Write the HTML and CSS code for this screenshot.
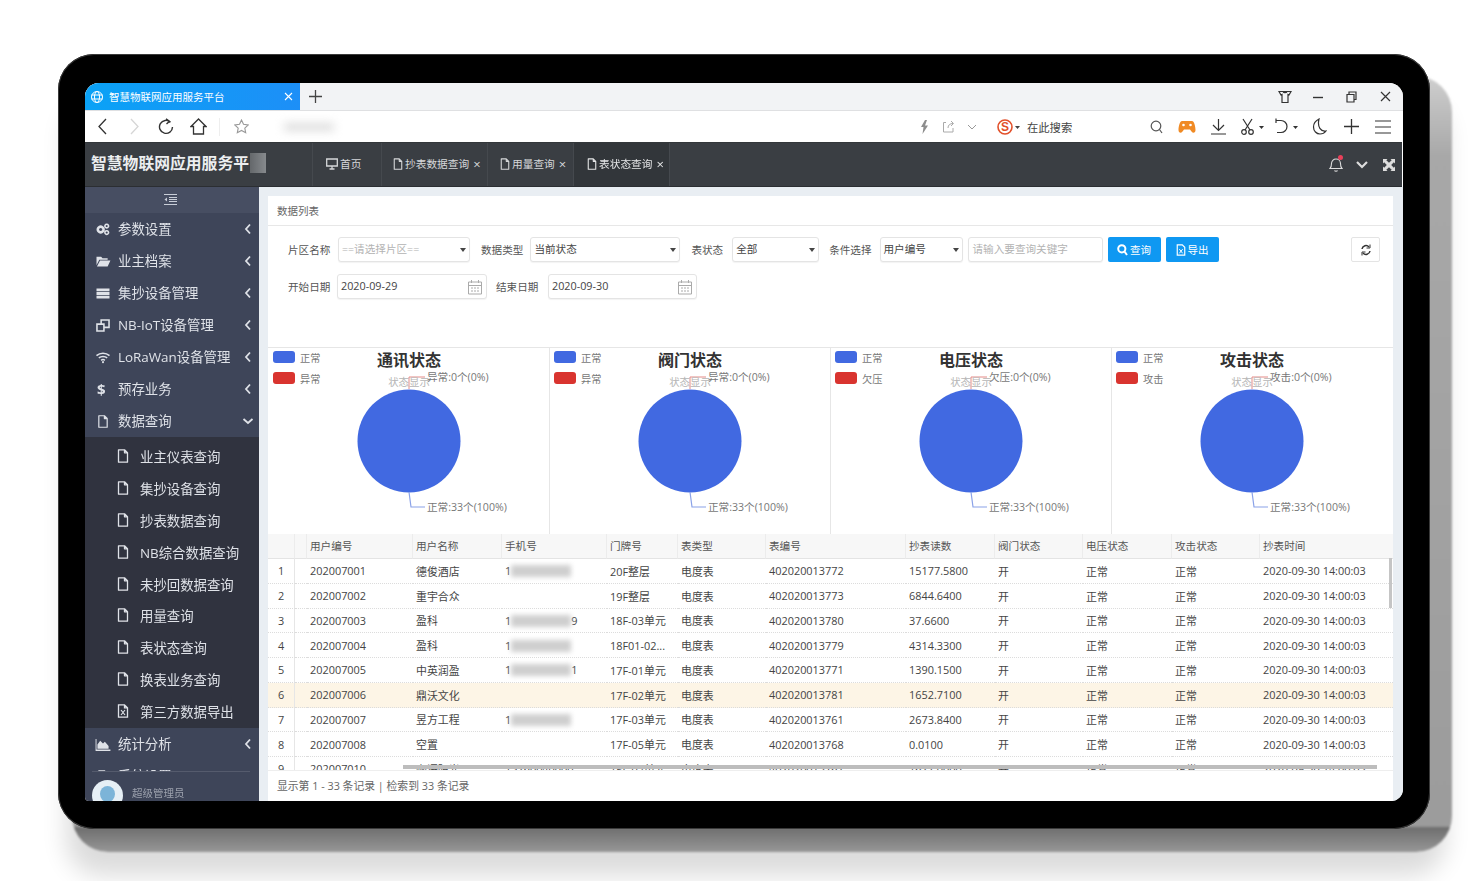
FILE: index.html
```html
<!DOCTYPE html>
<html lang="zh-CN">
<head>
    <meta charset="UTF-8">
    <title>智慧物联网应用服务平台</title>
    <link rel="stylesheet" href="styles.css">
</head>
<body>

<svg class="sprite" width="0" height="0">
    <symbol id="i-file" viewBox="0 0 12 14"><path d="M1.5 .8h6l3 3v9.4h-9zM7.500 .8v3h3" fill="none" stroke="currentColor" stroke-width="1.3" stroke-linejoin="round"/></symbol>
    <symbol id="i-left" viewBox="0 0 8 12"><path d="M6 1.500 2 6l4 4.500" fill="none" stroke="currentColor" stroke-width="1.8"/></symbol>
    <symbol id="i-cal" viewBox="0 0 16 16"><path d="M1.500 3h13v12h-13zM1.500 6.500h13M4.500 1v3M11.500 1v3" fill="none" stroke="#aaa" stroke-width="1"/><path d="M4 9h2M7 9h2M10 9h2M4 12h2M7 12h2M10 12h2" stroke="#aaa" stroke-width="1.200"/></symbol>
    <symbol id="i-pie" viewBox="0 0 281 186"><circle cx="141" cy="93" r="51.500" fill="#4169e1"/></symbol>
</svg>

<div class="stage">
<div class="tablet">
<div class="screen">

    <!-- 浏览器标签栏 -->
    <div class="browser-tabs">
        <div class="browser-tab">
            <svg width="14" height="14" viewBox="0 0 14 14" fill="none" stroke="#fff" stroke-width="1"><circle cx="7" cy="7" r="5.500"/><ellipse cx="7" cy="7" rx="2.500" ry="5.500"/><path d="M1.500 5h11M1.500 9h11"/></svg>
            <span class="browser-tab-title">智慧物联网应用服务平台</span>
            <svg width="9" height="9" viewBox="0 0 9 9" stroke="#fff" stroke-width="1.100"><path d="M1 1l7 7M8 1 1 8"/></svg>
        </div>
        <svg class="tab-plus" width="13" height="13" viewBox="0 0 13 13" stroke="#444" stroke-width="1.300"><path d="M6.500 0v13M0 6.500h13"/></svg>
        <div class="spacer"></div>
        <div class="win-btn"><svg width="14" height="14" viewBox="0 0 14 14" fill="none" stroke="#333" stroke-width="1.200"><path d="M1 1.500h12l-2 3.500-1-.5v8H4v-8l-1 .5zM5 1.500c.5 1.500 3.500 1.500 4 0"/></svg></div>
        <div class="win-btn"><svg width="10" height="10" viewBox="0 0 10 10" stroke="#333" stroke-width="1.400"><path d="M0 5.500h10"/></svg></div>
        <div class="win-btn"><svg width="11" height="12" viewBox="0 0 11 12" fill="none" stroke="#333" stroke-width="1.200"><path d="M1 3.500h7v7.500H1zM3 3.500V1h7v7.500H8"/></svg></div>
        <div class="win-btn"><svg width="11" height="11" viewBox="0 0 11 11" stroke="#333" stroke-width="1.200"><path d="M1 1l9 9M10 1l-9 9"/></svg></div>
    </div>

    <!-- 地址栏 -->
    <div class="browser-bar">
        <div class="bar-btn"><svg width="11" height="17" viewBox="0 0 11 17" fill="none" stroke="#333" stroke-width="1.300"><path d="M9 1 2 8.500 9 16"/></svg></div>
        <div class="bar-btn"><svg width="11" height="17" viewBox="0 0 11 17" fill="none" stroke="#d6d6d6" stroke-width="1.300"><path d="M2 1l7 7.500L2 16"/></svg></div>
        <div class="bar-btn"><svg width="16" height="17" viewBox="0 0 16 17" fill="none" stroke="#333" stroke-width="1.400"><path d="M12.500 4.200A6.500 6.500 0 1 0 14.500 9M8 .8l3.500 2.500L8.500 6" /></svg></div>
        <div class="bar-btn"><svg width="17" height="17" viewBox="0 0 17 17" fill="none" stroke="#333" stroke-width="1.300"><path d="M8.500 1 1 8.500h2.500V16h10V8.500H16z"/></svg></div>
        <div class="bar-divider"></div>
        <div class="bar-btn"><svg width="15" height="15" viewBox="0 0 15 15" fill="none" stroke="#999" stroke-width="1.100"><path d="M7.500 1l2 4.300 4.700.6-3.400 3.200.9 4.700-4.200-2.300-4.200 2.300.9-4.700L.8 5.900l4.700-.6z"/></svg></div>
        <div class="bar-blur"></div>
        <div class="spacer"></div>
        <div class="bar-small"><svg width="9" height="14" viewBox="0 0 9 14" fill="#8d8d8d"><path d="M5 0 1 7h2.500L2.500 14 8 5.500H5L7 0z"/></svg></div>
        <div class="bar-small"><svg width="13" height="13" viewBox="0 0 13 13" fill="none" stroke="#aaa" stroke-width="1"><path d="M4 2.500H1.500v9.500h9.500V8M6 8c0-3 2-4.500 5-4.500M9 1l2.500 2.500L9 6"/></svg></div>
        <div class="bar-small"><svg width="10" height="6" viewBox="0 0 10 6" fill="none" stroke="#999" stroke-width="1"><path d="M1 1l4 4 4-4"/></svg></div>
        <div class="bar-search">
            <svg width="24" height="18" viewBox="0 0 24 18"><circle cx="9" cy="9" r="7" fill="#fff" stroke="#e2502a" stroke-width="1.600"/><text x="9" y="13" font-size="12" font-weight="700" fill="#e2502a" text-anchor="middle" font-family="Liberation Sans">S</text><path d="M19 8h5l-2.500 3z" fill="#444"/></svg>
            <span>在此搜索</span>
        </div>
        <div class="bar-btn narrow"><svg width="13" height="14" viewBox="0 0 13 14" fill="none" stroke="#555" stroke-width="1.200"><circle cx="6" cy="6" r="4.800"/><path d="M9.500 9.500 12 13"/></svg></div>
        <div class="bar-btn"><svg width="18" height="14" viewBox="0 0 18 14"><path d="M4 1h10c2 0 3.500 5 3.500 9 0 3-2.500 3.500-4 1.500L12 9.500H6L4.500 11.500c-1.500 2-4 1.500-4-1.500C.5 6 2 1 4 1z" fill="#f08a24"/><circle cx="5.500" cy="5" r="1.300" fill="#fff"/><circle cx="12.500" cy="5" r="1.300" fill="#fff"/></svg></div>
        <div class="bar-btn tight"><svg width="17" height="17" viewBox="0 0 17 17" fill="none" stroke="#333" stroke-width="1.200"><path d="M8.500 1v11M3 7l5.500 5.500L14 7M1 16h15"/></svg></div>
        <div class="bar-btn wide"><svg width="26" height="17" viewBox="0 0 26 17" fill="none" stroke="#333" stroke-width="1.200"><path d="M3 1l7 11M12 1 5 12"/><circle cx="4" cy="14" r="2.300"/><circle cx="11" cy="14" r="2.300"/><path d="M19 8h5l-2.500 3z" fill="#333" stroke="none"/></svg></div>
        <div class="bar-btn"><svg width="26" height="17" viewBox="0 0 26 17" fill="none" stroke="#333" stroke-width="1.200"><path d="M2 2.500h5a6 6 0 0 1 0 12H3M2 .5v4.500"/><path d="M19 8h5l-2.500 3z" fill="#333" stroke="none"/></svg></div>
        <div class="bar-btn"><svg width="15" height="17" viewBox="0 0 15 17" fill="none" stroke="#333" stroke-width="1.200"><path d="M7 1C3 3 1.500 6 1.500 9c0 4 3 7 6.500 7 2.500 0 4.500-1 6-3-5 1-9-4-7-12z"/></svg></div>
        <div class="bar-btn"><svg width="15" height="15" viewBox="0 0 15 15" stroke="#333" stroke-width="1.300"><path d="M7.500 0v15M0 7.500h15"/></svg></div>
        <div class="bar-btn"><svg width="16" height="14" viewBox="0 0 16 14" stroke="#333" stroke-width="1.200"><path d="M0 1h16M0 7h16M0 13h16"/></svg></div>
    </div>

    <!-- 系统顶栏 -->
    <div class="app-header">
        <div class="logo"><span>智慧物联网应用服务平</span><i class="logo-blur"></i></div>
        <div class="nav-tab tab-home">
            <svg width="12" height="12" viewBox="0 0 12 12" fill="none" stroke="currentColor" stroke-width="1.300"><path d="M.7 1h10.600v7H.7z"/><path d="M3.500 11h5M6 8v3" /></svg>首页
        </div>
        <div class="nav-tab tab-a"><svg class="ico-f"><use href="#i-file"/></svg>抄表数据查询<b>×</b></div>
        <div class="nav-tab tab-b"><svg class="ico-f"><use href="#i-file"/></svg>用量查询<b>×</b></div>
        <div class="nav-tab tab-c active"><svg class="ico-f"><use href="#i-file"/></svg>表状态查询<b>×</b></div>
        <div class="spacer"></div>
        <div class="head-btn bell">
            <svg width="14" height="17" viewBox="0 0 14 17" fill="none" stroke="#ddd" stroke-width="1.100"><path d="M1 12.500c1.500-1.500 1.500-3 1.500-5C2.500 5 4.500 3 7 3s4.500 2 4.500 4.500c0 2 0 3.500 1.500 5zM5.500 14.500c.5 1 2.500 1 3 0"/></svg>
            <i class="bell-dot"></i>
        </div>
        <div class="head-btn"><svg width="12" height="8" viewBox="0 0 12 8" fill="none" stroke="#ddd" stroke-width="2.200"><path d="M1 1l5 5 5-5"/></svg></div>
        <div class="head-btn"><svg width="12" height="12" viewBox="0 0 12 12" fill="#ddd"><path d="M0 0h4.500L3.300 1.200 6 3.800 8.700 1.200 7.500 0H12v4.500l-1.200-1.200L8.200 6l2.600 2.700L12 7.500V12H7.500l1.200-1.200L6 8.200 3.300 10.800 4.500 12H0V7.500l1.200 1.200L3.800 6 1.200 3.300 0 4.500z"/></svg></div>
    </div>

    <div class="app-body">
        <!-- 左侧菜单 -->
        <aside class="sidebar">
            <div class="side-toggle"><svg width="13" height="11" viewBox="0 0 13 11" stroke="#c9ced8" stroke-width="1"><path d="M0 .5h13M5 3.500h8M5 5.500h8M5 7.500h8M0 10.500h13"/><path d="M3 3.500 .5 5.500l2.500 2z" fill="#c9ced8" stroke="none"/></svg></div>
            <div class="side-menu">
                <div class="menu-item">
                    <svg class="menu-ico" viewBox="0 0 16 14" fill="currentColor"><path d="M5.500 2.500a4.500 4.500 0 1 0 .01 0zm0 2.800a1.700 1.700 0 1 1-.01 0zM12 .5a2.800 2.800 0 1 0 .01 0zm0 1.700a1.100 1.100 0 1 1-.01 0zM12 7.500a2.800 2.800 0 1 0 .01 0zm0 1.700a1.100 1.100 0 1 1-.01 0z" fill-rule="evenodd"/></svg>
                    <span>参数设置</span><svg class="arrow"><use href="#i-left"/></svg>
                </div>
                <div class="menu-item">
                    <svg class="menu-ico" viewBox="0 0 16 14" fill="currentColor"><path d="M1 2h5l1.500 1.500H13V5H4L1 11zM4.800 6H16l-3 6.500H1.500z"/></svg>
                    <span>业主档案</span><svg class="arrow"><use href="#i-left"/></svg>
                </div>
                <div class="menu-item">
                    <svg class="menu-ico" viewBox="0 0 16 14" fill="currentColor"><path d="M1 1.500h14v3H1zM1 5.500h14v3H1zM1 9.500h14v3H1z"/></svg>
                    <span>集抄设备管理</span><svg class="arrow"><use href="#i-left"/></svg>
                </div>
                <div class="menu-item">
                    <svg class="menu-ico" viewBox="0 0 16 14" fill="none" stroke="currentColor" stroke-width="1.700"><path d="M1.500 5.500h7.500v7.500H1.500zM6 5.500V1h8.500v8H9"/></svg>
                    <span>NB-IoT设备管理</span><svg class="arrow"><use href="#i-left"/></svg>
                </div>
                <div class="menu-item">
                    <svg class="menu-ico" viewBox="0 0 16 14" fill="none" stroke="currentColor" stroke-width="1.700"><path d="M1 5c4-3.500 10-3.500 14 0M3.500 7.500c2.500-2 6.500-2 9 0M6 10c1-.8 3-.8 4 0"/><circle cx="8" cy="12" r="1.100" fill="currentColor" stroke="none"/></svg>
                    <span>LoRaWan设备管理</span><svg class="arrow"><use href="#i-left"/></svg>
                </div>
                <div class="menu-item">
                    <em class="menu-ico dollar">$</em>
                    <span>预存业务</span><svg class="arrow"><use href="#i-left"/></svg>
                </div>
                <div class="menu-item">
                    <svg class="menu-ico"><use href="#i-file"/></svg>
                    <span>数据查询</span><svg class="arrow down"><use href="#i-left"/></svg>
                </div>
                <div class="submenu">
                    <div class="sub-item"><svg class="sub-ico"><use href="#i-file"/></svg>业主仪表查询</div>
                    <div class="sub-item"><svg class="sub-ico"><use href="#i-file"/></svg>集抄设备查询</div>
                    <div class="sub-item"><svg class="sub-ico"><use href="#i-file"/></svg>抄表数据查询</div>
                    <div class="sub-item"><svg class="sub-ico"><use href="#i-file"/></svg>NB综合数据查询</div>
                    <div class="sub-item"><svg class="sub-ico"><use href="#i-file"/></svg>未抄回数据查询</div>
                    <div class="sub-item"><svg class="sub-ico"><use href="#i-file"/></svg>用量查询</div>
                    <div class="sub-item"><svg class="sub-ico"><use href="#i-file"/></svg>表状态查询</div>
                    <div class="sub-item"><svg class="sub-ico"><use href="#i-file"/></svg>换表业务查询</div>
                    <div class="sub-item"><svg class="sub-ico" viewBox="0 0 12 14"><path d="M1.500 .8h6l3 3v9.400h-9zM7.500 .8v3h3" fill="none" stroke="currentColor" stroke-width="1.300"/><path d="M4 6l4 5M8 6l-4 5" stroke="currentColor" stroke-width="1.200"/></svg>第三方数据导出</div>
                </div>
                <div class="menu-item">
                    <svg class="menu-ico" viewBox="0 0 16 14" fill="currentColor"><path d="M0 1h1v11.500h15V14H0z"/><path d="M2 11.500V7l3-4 3 3 2-2 4 4.500v3z"/></svg>
                    <span>统计分析</span><svg class="arrow"><use href="#i-left"/></svg>
                </div>
                <div class="menu-item">
                    <svg class="menu-ico"><use href="#i-file"/></svg>
                    <span>系统设置</span><svg class="arrow"><use href="#i-left"/></svg>
                </div>
            </div>
            <div class="side-user">
                <div class="avatar"><i></i></div>
                <span>超级管理员</span>
            </div>
        </aside>

        <!-- 内容区 -->
        <main class="main">
            <div class="card">
                <div class="card-head">数据列表</div>

                <div class="filters">
                    <div class="filter-row">
                        <label class="w-l1">片区名称</label>
                        <div class="ctl select w-s1 muted">==请选择片区==</div>
                        <label class="w-l2">数据类型</label>
                        <div class="ctl select w-s2">当前状态</div>
                        <label class="w-l3">表状态</label>
                        <div class="ctl select w-s3">全部</div>
                        <label class="w-l4">条件选择</label>
                        <div class="ctl select w-s4">用户编号</div>
                        <div class="ctl w-kw muted">请输入要查询关键字</div>
                        <button class="btn">
                            <svg width="11" height="12" viewBox="0 0 11 12" fill="none" stroke="#fff" stroke-width="2"><circle cx="4.800" cy="4.800" r="3.600"/><path d="M7.500 7.500 10 11"/></svg>查询
                        </button>
                        <button class="btn">
                            <svg width="10" height="12" viewBox="0 0 12 14"><path d="M1.500 .8h6l3 3v9.400h-9z" fill="none" stroke="#fff" stroke-width="1.400"/><path d="M4 6l4 5M8 6l-4 5" stroke="#fff" stroke-width="1.200"/></svg>导出
                        </button>
                        <div class="spacer"></div>
                        <button class="btn-refresh">
                            <svg width="10" height="12" viewBox="0 0 10 12" fill="none" stroke="#333" stroke-width="1.500"><path d="M1 5a4 4 0 0 1 7-2M9 7a4 4 0 0 1-7 2"/><path d="M9 .5V4H5.500M1 11.500V8h3.500" stroke-width="1"/></svg>
                        </button>
                    </div>
                    <div class="filter-row">
                        <label class="w-l1 tight">开始日期</label>
                        <div class="ctl date w-d1">2020-09-29<svg class="cal"><use href="#i-cal"/></svg></div>
                        <label class="w-l5">结束日期</label>
                        <div class="ctl date w-d2">2020-09-30<svg class="cal"><use href="#i-cal"/></svg></div>
                    </div>
                </div>

                <div class="charts">
                    <div class="chart">
                        <div class="legend">
                            <div><i class="sw-blue"></i>正常</div>
                            <div><i class="sw-red"></i>异常</div>
                        </div>
                        <svg class="chart-svg" viewBox="0 0 281 186">
                            <use href="#i-pie"/>
                            <path d="M141 41V29h16" class="line-red"/>
                            <path d="M141 144l2 15h14" class="line-blue"/>
                            <text x="141" y="18" class="c-title">通讯状态</text>
                            <text x="141" y="38" class="c-sub">状态显示</text>
                            <text x="159" y="33" class="c-label">异常:0个(0%)</text>
                            <text x="159" y="163" class="c-label">正常:33个(100%)</text>
                        </svg>
                    </div>
                    <div class="chart">
                        <div class="legend">
                            <div><i class="sw-blue"></i>正常</div>
                            <div><i class="sw-red"></i>异常</div>
                        </div>
                        <svg class="chart-svg" viewBox="0 0 281 186">
                            <use href="#i-pie"/>
                            <path d="M141 41V29h16" class="line-red"/>
                            <path d="M141 144l2 15h14" class="line-blue"/>
                            <text x="141" y="18" class="c-title">阀门状态</text>
                            <text x="141" y="38" class="c-sub">状态显示</text>
                            <text x="159" y="33" class="c-label">异常:0个(0%)</text>
                            <text x="159" y="163" class="c-label">正常:33个(100%)</text>
                        </svg>
                    </div>
                    <div class="chart">
                        <div class="legend">
                            <div><i class="sw-blue"></i>正常</div>
                            <div><i class="sw-red"></i>欠压</div>
                        </div>
                        <svg class="chart-svg" viewBox="0 0 281 186">
                            <use href="#i-pie"/>
                            <path d="M141 41V29h16" class="line-red"/>
                            <path d="M141 144l2 15h14" class="line-blue"/>
                            <text x="141" y="18" class="c-title">电压状态</text>
                            <text x="141" y="38" class="c-sub">状态显示</text>
                            <text x="159" y="33" class="c-label">欠压:0个(0%)</text>
                            <text x="159" y="163" class="c-label">正常:33个(100%)</text>
                        </svg>
                    </div>
                    <div class="chart">
                        <div class="legend">
                            <div><i class="sw-blue"></i>正常</div>
                            <div><i class="sw-red"></i>攻击</div>
                        </div>
                        <svg class="chart-svg" viewBox="0 0 281 186">
                            <use href="#i-pie"/>
                            <path d="M141 41V29h16" class="line-red"/>
                            <path d="M141 144l2 15h14" class="line-blue"/>
                            <text x="141" y="18" class="c-title">攻击状态</text>
                            <text x="141" y="38" class="c-sub">状态显示</text>
                            <text x="159" y="33" class="c-label">攻击:0个(0%)</text>
                            <text x="159" y="163" class="c-label">正常:33个(100%)</text>
                        </svg>
                    </div>
                </div>

                <div class="table-wrap">
                    <table class="data-table">
                        <colgroup>
                            <col class="c-idx"><col class="c-gap"><col class="c-106"><col class="c-89"><col class="c-105"><col class="c-71"><col class="c-88"><col class="c-140"><col class="c-89"><col class="c-88"><col class="c-89"><col class="c-88"><col>
                        </colgroup>
                        <thead>
                            <tr><th></th><th></th><th>用户编号</th><th>用户名称</th><th>手机号</th><th>门牌号</th><th>表类型</th><th>表编号</th><th>抄表读数</th><th>阀门状态</th><th>电压状态</th><th>攻击状态</th><th>抄表时间</th></tr>
                        </thead>
                        <tbody>
                            <tr><td class="idx">1</td><td></td><td>202007001</td><td>德俊酒店</td><td>1<i class="mask"></i></td><td>20F整层</td><td>电度表</td><td>402020013772</td><td>15177.5800</td><td>开</td><td>正常</td><td>正常</td><td>2020-09-30 14:00:03</td></tr>
                            <tr><td class="idx">2</td><td></td><td>202007002</td><td>重宇合众</td><td></td><td>19F整层</td><td>电度表</td><td>402020013773</td><td>6844.6400</td><td>开</td><td>正常</td><td>正常</td><td>2020-09-30 14:00:03</td></tr>
                            <tr><td class="idx">3</td><td></td><td>202007003</td><td>盈科</td><td>1<i class="mask"></i>9</td><td>18F-03单元</td><td>电度表</td><td>402020013780</td><td>37.6600</td><td>开</td><td>正常</td><td>正常</td><td>2020-09-30 14:00:03</td></tr>
                            <tr><td class="idx">4</td><td></td><td>202007004</td><td>盈科</td><td>1<i class="mask"></i></td><td>18F01-02...</td><td>电度表</td><td>402020013779</td><td>4314.3300</td><td>开</td><td>正常</td><td>正常</td><td>2020-09-30 14:00:03</td></tr>
                            <tr><td class="idx">5</td><td></td><td>202007005</td><td>中英润盈</td><td>1<i class="mask"></i>1</td><td>17F-01单元</td><td>电度表</td><td>402020013771</td><td>1390.1500</td><td>开</td><td>正常</td><td>正常</td><td>2020-09-30 14:00:03</td></tr>
                            <tr class="selected"><td class="idx">6</td><td></td><td>202007006</td><td>鼎沃文化</td><td></td><td>17F-02单元</td><td>电度表</td><td>402020013781</td><td>1652.7100</td><td>开</td><td>正常</td><td>正常</td><td>2020-09-30 14:00:03</td></tr>
                            <tr><td class="idx">7</td><td></td><td>202007007</td><td>昱方工程</td><td>1<i class="mask"></i></td><td>17F-03单元</td><td>电度表</td><td>402020013761</td><td>2673.8400</td><td>开</td><td>正常</td><td>正常</td><td>2020-09-30 14:00:03</td></tr>
                            <tr><td class="idx">8</td><td></td><td>202007008</td><td>空置</td><td></td><td>17F-05单元</td><td>电度表</td><td>402020013768</td><td>0.0100</td><td>开</td><td>正常</td><td>正常</td><td>2020-09-30 14:00:03</td></tr>
                            <tr><td class="idx">9</td><td></td><td>202007010</td><td>咖语阳光</td><td>15260040000</td><td>15F-02单元</td><td>电度表</td><td>402020013767</td><td>1627.0000</td><td>开</td><td>正常</td><td>正常</td><td>2020-09-30 14:00:03</td></tr>
                        </tbody>
                    </table>
                    <div class="scroll-y"></div>
                    <div class="scroll-x"></div>
                </div>

                <div class="pager">显示第 1 - 33 条记录 | 检索到 33 条记录</div>
            </div>
        </main>
    </div>

</div>
</div>
</div>

</body>
</html>
```

FILE: styles.css
```css
* {
    box-sizing: border-box;
}

body {
    margin: 0;
    background-color: #fff;
    font-family: "Open Sans", "Noto Sans CJK SC", sans-serif;
    overflow: hidden;
}

.sprite {
    position: absolute;
}

.spacer {
    flex: 1;
}

.stage {
    width: 1483px;
    height: 881px;
    padding: 54px 0 0 58px;
}

/* 平板外框 */
.tablet {
    position: relative;
    width: 1372px;
    height: 775px;
    padding: 29px 27px 28px 27px;
    background-color: #000;
    border-radius: 36px;
    box-shadow: inset 0 0 0 1px #3a3a3a;
}

/* 平板投影 */
.tablet::before {
    content: "";
    position: absolute;
    top: 22px;
    left: 14px;
    right: -22px;
    bottom: -23px;
    z-index: -1;
    border-radius: 36px;
    background: linear-gradient(180deg, #cfcfcf 0, #a8a8a8 80px, #9c9c9c 750px, #6f6f6f 752px, #979797 776px);
    box-shadow: -6px 24px 24px rgba(0, 0, 0, 0.14);
    filter: blur(0.8px);
}

.screen {
    display: flex;
    flex-direction: column;
    height: 718px;
    background-color: #fff;
    border-radius: 14px 14px 12px 4px;
    overflow: hidden;
    filter: blur(0.35px);
}

/* 浏览器标签栏 */
.browser-tabs {
    display: flex;
    align-items: center;
    flex: 0 0 27px;
    background-color: #f2f3f5;
    border-bottom: 1px solid #dfe0e2;
}

.browser-tab {
    display: flex;
    align-items: center;
    width: 215px;
    height: 27px;
    padding: 0 7px 0 5px;
    color: #fff;
    font-size: 10.5px;
    background: linear-gradient(90deg, #0aa2f6, #1d8ff7);
}

.browser-tab-title {
    flex: 1;
    margin-left: 5px;
}

.tab-plus {
    margin-left: 9px;
}

.win-btn {
    display: flex;
    align-items: center;
    justify-content: center;
    width: 33.500px;
    height: 26px;
}

.win-btn:last-child {
    margin-right: 1px;
}

/* 地址栏 */
.browser-bar {
    display: flex;
    align-items: center;
    flex: 0 0 31px;
    padding: 0 4px 0 1px;
    background-color: #fff;
}

.bar-btn {
    display: flex;
    align-items: center;
    justify-content: center;
    width: 32px;
    height: 31px;
}

.bar-btn.narrow {
    width: 30px;
}

.bar-btn.tight {
    width: 31px;
}

.bar-btn.wide {
    width: 37px;
}

.bar-divider {
    width: 1px;
    height: 18px;
    margin: 0 5px;
    background-color: #eee;
}

.bar-blur {
    width: 50px;
    height: 8px;
    margin-left: 27px;
    background-color: #bbb;
    filter: blur(5px);
    opacity: 0.5;
}

.bar-small {
    display: flex;
    align-items: center;
    justify-content: center;
    width: 24px;
    height: 31px;
}

.bar-search {
    display: flex;
    align-items: center;
    width: 145px;
    margin-left: 12px;
    font-size: 11.300px;
    color: #444;
}

.bar-search span {
    margin-left: 7px;
}

/* 系统顶栏 */
.app-header {
    display: flex;
    align-items: stretch;
    flex: 0 0 45px;
    margin-right: 1px;
    color: #d6d8da;
    font-size: 10.700px;
    background-color: #3a3e43;
    border-top: 1px solid #33373a;
    border-bottom: 1px solid #2b2e32;
}

.logo {
    display: flex;
    align-items: center;
    width: 227px;
    padding: 0 0 4px 6px;
    color: #eceef0;
    font-size: 15.800px;
    font-weight: 700;
}

.logo-blur {
    width: 16px;
    height: 20px;
    margin-left: 1px;
    background: linear-gradient(90deg, #6f7275, #9a9da0);
    opacity: 0.8;
}

.nav-tab {
    display: flex;
    align-items: center;
    padding-bottom: 2px;
    padding-left: 13px;
    border-left: 1px solid #45494e;
}

.nav-tab svg {
    margin-right: 2px;
}

.nav-tab b {
    margin-left: 4px;
    font-size: 13px;
    font-weight: 400;
}

.tab-home {
    width: 69px;
}

.tab-a {
    width: 106px;
    padding-left: 11px;
}

.tab-b {
    width: 86px;
    padding-left: 12px;
}

.tab-c {
    width: 97px;
    padding-left: 13px;
    border-right: 1px solid #45494e;
}

.nav-tab.active {
    color: #e6e7e8;
    background-color: #32363a;
}

.ico-f {
    width: 10px;
    height: 12px;
}

.head-btn {
    position: relative;
    display: flex;
    align-items: center;
    justify-content: center;
    width: 26.500px;
}

.bell-dot {
    position: absolute;
    top: 12px;
    right: 6px;
    width: 5px;
    height: 5px;
    background-color: #e8405a;
    border-radius: 50%;
}

/* 左侧菜单 */
.app-body {
    display: flex;
    flex: 1;
    min-height: 0;
}

.sidebar {
    display: flex;
    flex-direction: column;
    flex: 0 0 174px;
    color: #dfe2e8;
    background-color: #3e4559;
}

.side-toggle {
    display: flex;
    align-items: center;
    justify-content: center;
    flex: 0 0 26px;
    padding: 0 4px 1px 0;
    background-color: #474e62;
}

.side-menu {
    flex: 1;
    min-height: 0;
    overflow: hidden;
}

.menu-item {
    display: flex;
    align-items: center;
    height: 32px;
    padding: 0 7px 0 10px;
    font-size: 13.400px;
}

.menu-item span {
    flex: 1;
    margin-left: 7px;
    padding-bottom: 2px;
}

.menu-ico {
    flex: 0 0 16px;
    width: 16px;
    height: 13px;
}

.dollar {
    height: auto;
    padding-left: 2px;
    font-size: 15px;
    font-style: normal;
    font-weight: 700;
}

.arrow {
    width: 8px;
    height: 12px;
}

.arrow.down {
    transform: rotate(-90deg);
}

.submenu {
    padding-top: 4px;
    background-color: #30333f;
}

.sub-item {
    display: flex;
    align-items: center;
    height: 31.900px;
    padding: 0 0 2px 32px;
    font-size: 13.400px;
}

.sub-ico {
    width: 12px;
    height: 14px;
    margin-right: 11px;
}

.side-user {
    position: relative;
    display: flex;
    align-items: flex-start;
    flex: 0 0 30px;
    margin: 0 9px 0 7px;
    padding-top: 8px;
    font-size: 10.500px;
    color: #9ca1ad;
    border-top: 1px solid #555b6d;
    overflow: hidden;
}

.avatar {
    flex: 0 0 31px;
    height: 31px;
    padding: 6px 0 0 8px;
    background-color: #e6eff5;
    border-radius: 50%;
}

.avatar i {
    display: block;
    width: 15px;
    height: 16px;
    background-color: #7cb4d8;
    border-radius: 50%;
}

.side-user span {
    margin: 6px 0 0 9px;
    line-height: 15px;
}

/* 内容区 */
.main {
    flex: 1;
    min-width: 0;
    padding: 9px 10px 0 9px;
    background-color: #e9eef3;
}

.card {
    display: flex;
    flex-direction: column;
    height: 100%;
    background-color: #fff;
}

.card-head {
    flex: 0 0 30px;
    padding: 8px 0 0 9px;
    font-size: 10.500px;
    line-height: 15px;
    color: #666;
    border-bottom: 1px solid #e7e7e7;
}

.filters {
    flex: 0 0 121px;
    padding: 11px 13px 0 20px;
    font-size: 10.600px;
    color: #555;
}

.filter-row {
    display: flex;
    align-items: center;
    height: 25px;
    margin-bottom: 12px;
}

.filter-row label {
    flex: none;
}

.ctl {
    position: relative;
    flex: none;
    height: 25px;
    padding: 0 3px;
    line-height: 22px;
    color: #444;
    background-color: #fff;
    border: 1px solid #e4e4e4;
    border-radius: 3px;
    box-shadow: 0 1px 1px rgba(0, 0, 0, 0.05);
}

.muted {
    color: #b3b3b3;
}

.select::after {
    content: "";
    position: absolute;
    top: 10px;
    right: 3px;
    border: 3px solid transparent;
    border-top: 4px solid #444;
    border-bottom: 0;
}

.date {
    font-size: 10.800px;
}

.cal {
    position: absolute;
    top: 4px;
    right: 3px;
    width: 16px;
    height: 16px;
}

.w-l1 { width: 50px; }
.w-l1.tight { width: 49px; }
.w-l5 { width: 52px; margin-left: 9px; }
.w-s1 { width: 132px; }
.w-s2 { width: 150px; }
.w-s3 { width: 87px; }
.w-s4 { width: 83px; }
.w-kw { width: 135px; margin-left: 5px; padding-left: 4px; }
.w-d1 { width: 150px; }
.w-d2 { width: 149px; }

.w-l2 { margin: 0 7px 0 11px; }
.w-l3 { margin: 0 9px 0 11px; }
.w-l4 { margin: 0 8px 0 10px; }

.btn {
    display: flex;
    align-items: center;
    justify-content: center;
    flex: none;
    width: 53px;
    height: 25px;
    margin-left: 5px;
    padding: 0;
    color: #fff;
    font-family: inherit;
    font-size: 10.500px;
    background-color: #0f98f2;
    border: none;
    border-radius: 2px;
}

.btn svg {
    margin-right: 2px;
}

.btn-refresh {
    display: flex;
    align-items: center;
    justify-content: center;
    flex: none;
    width: 29px;
    height: 25px;
    padding: 0;
    background-color: #fff;
    border: 1px solid #e4e4e4;
    border-radius: 2px;
}

/* 饼图 */
.charts {
    display: flex;
    flex: 0 0 187px;
    padding-left: 1px;
    border-top: 1px solid #e6e6e6;
}

.chart {
    position: relative;
    flex: 0 0 281px;
    min-width: 0;
    height: 186px;
    border-right: 1px solid #e6e6e6;
}

.chart:last-child {
    flex: 1;
    border-right: none;
}

.chart-svg {
    display: block;
    width: 281px;
    height: 186px;
    margin-left: -1px;
}

.legend {
    position: absolute;
    top: 3px;
    left: 4px;
    font-size: 10.200px;
    color: #777;
}

.legend div {
    display: flex;
    align-items: center;
    height: 12px;
    margin-bottom: 9px;
}

.legend i {
    width: 22px;
    height: 12px;
    margin-right: 5px;
    border-radius: 3px;
}

.sw-blue {
    background-color: #4169e1;
}

.sw-red {
    background-color: #d9342f;
}

.c-title {
    font-size: 16px;
    font-weight: 700;
    fill: #333;
    text-anchor: middle;
}

.c-sub {
    font-size: 10.400px;
    fill: #b5b5b5;
    text-anchor: middle;
}

.c-label {
    font-size: 10.600px;
    fill: #777;
}

.line-red {
    fill: none;
    stroke: #e58a87;
    stroke-width: 1;
}

.line-blue {
    fill: none;
    stroke: #8aa2e8;
    stroke-width: 1.200;
}

/* 表格 */
.table-wrap {
    position: relative;
    flex: 0 0 236px;
    overflow: hidden;
}

.data-table {
    width: 100%;
    table-layout: fixed;
    border-collapse: separate;
    border-spacing: 0;
    font-size: 10.900px;
    color: #444;
}

.c-idx { width: 27px; }
.c-gap { width: 12px; }
.c-106 { width: 106px; }
.c-105 { width: 105px; }
.c-89 { width: 89px; }
.c-88 { width: 88px; }
.c-71 { width: 71px; }
.c-140 { width: 140px; }

.data-table th {
    height: 25px;
    padding: 0 0 2px 3px;
    font-weight: 400;
    text-align: left;
    color: #555;
    font-size: 10.600px;
    background-color: #f7f7f7;
    border-right: 1px solid #ececec;
    border-bottom: 1px solid #e4e4e4;
}

.data-table th:last-child {
    border-right: none;
}

.data-table td {
    height: 24.750px;
    padding: 0 0 0 3px;
    white-space: nowrap;
    overflow: hidden;
    border-bottom: 1px dotted #dcdcdc;
}

.data-table td.idx {
    padding: 0;
    text-align: center;
    border-right: 1px solid #e6e6e6;
}

.selected td {
    background-color: #fdf5e6;
}

.mask {
    display: inline-block;
    width: 60px;
    height: 12px;
    vertical-align: -2px;
    background-color: #cfcfcf;
    filter: blur(2.5px);
}

.scroll-y {
    position: absolute;
    top: 24px;
    right: 1px;
    width: 3px;
    height: 50px;
    background-color: #c5c5c5;
}

.scroll-x {
    position: absolute;
    left: 135px;
    bottom: 1px;
    width: 974px;
    height: 4px;
    background-color: #bdbdbd;
}

.pager {
    flex: 1;
    padding: 7px 0 0 9px;
    font-size: 10.800px;
    line-height: 15px;
    color: #666;
    border-top: 1px solid #eee;
}
```
